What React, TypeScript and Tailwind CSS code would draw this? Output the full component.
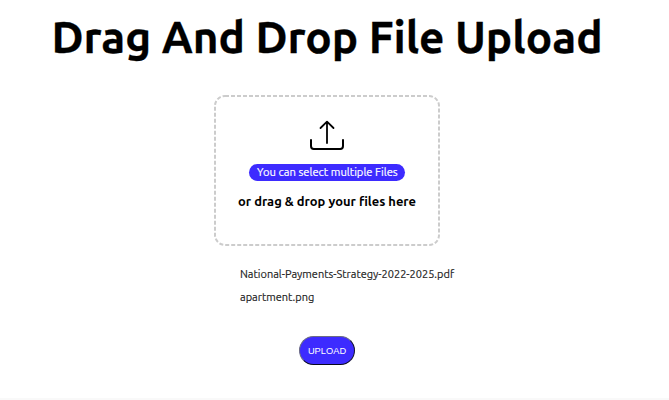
const files = ["National-Payments-Strategy-2022-2025.pdf", "apartment.png"];

function UploadIcon() {
  return (
    <svg
      width="36"
      height="32"
      viewBox="0 0 36 32"
      fill="none"
      stroke="#000"
      strokeWidth="2"
      strokeLinecap="round"
      strokeLinejoin="round"
    >
      <path d="M18 24V3M11.5 9L18 2.7L24.5 9" strokeWidth="1.8" />
      <path d="M2 21V27Q2 29.9 4.8 29.9H31.2Q34 29.9 34 27V21" />
    </svg>
  );
}

function DashedOutline() {
  return (
    <svg className="absolute inset-0" width="226" height="151" fill="none">
      <rect
        x="1"
        y="1"
        width="224"
        height="149"
        rx="10"
        stroke="#ccc"
        strokeWidth="2"
        strokeDasharray="4 2"
      />
    </svg>
  );
}

export default function App() {
  return (
    <main className="flex h-[400px] w-[669px] flex-col overflow-hidden border-b-2 border-[#f9f9f9] bg-white pr-[15px] font-['Ubuntu','Noto_Sans',sans-serif] text-black">
      <h1 className="mt-[7px] text-center text-[44.1px] leading-[60px] font-bold whitespace-nowrap [-webkit-text-stroke:0.3px_black]">
        Drag And Drop File Upload
      </h1>
      <section className="relative mt-[28px] flex h-[151px] w-[226px] flex-col items-center self-center pt-6">
        <DashedOutline />
        <UploadIcon />
        <span className="mt-[12.5px] flex h-[17.5px] w-[156px] items-center justify-center rounded-full bg-[#3d2bff] text-[12px] whitespace-nowrap text-white [-webkit-text-stroke:0.2px_white]">
          <span className="scale-x-[0.933]">You can select multiple Files</span>
        </span>
        <p className="mt-[10px] text-[12.95px] leading-5 font-bold whitespace-nowrap">
          or drag &amp; drop your files here
        </p>
      </section>
      <ul className="mt-[17px] ml-[240px] text-[11px] leading-[23px] whitespace-nowrap text-[#1c1c1c] [-webkit-text-stroke:0.15px_#1c1c1c]">
        {files.map((file) => (
          <li key={file}>{file}</li>
        ))}
      </ul>
      <button className="mt-[27px] h-[29px] w-14 self-center rounded-full border-[1.5px] border-t-[#6c6c84] border-r-[#15152c] border-b-[#08081c] border-l-[#6c6c84] bg-[#3d2bff] pt-0.5 font-['Liberation_Sans',sans-serif] text-[9.3px] text-white">
        UPLOAD
      </button>
    </main>
  );
}
